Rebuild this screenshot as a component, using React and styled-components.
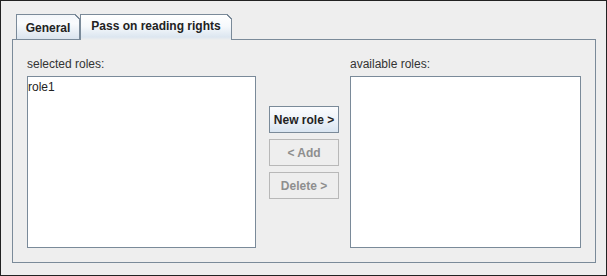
import React from 'react';
import styled, { createGlobalStyle } from 'styled-components';

const GlobalStyle = createGlobalStyle`
  body {
    margin: 0;
    background: #eeeeee;
  }
  * {
    box-sizing: border-box;
  }
`;

const Window = styled.div`
  width: 607px;
  height: 276px;
  border: 1px solid #222222;
  background: #eeeeee;
  padding: 13px 10px 12px 11px;
  display: flex;
  flex-direction: column;
  font-family: 'Liberation Sans', Arial, sans-serif;
  font-size: 12px;
  color: #333333;
`;

const TabRow = styled.div`
  display: flex;
  padding-left: 4px;
  height: 25px;
`;

const Tab = styled.div`
  position: relative;
  width: ${(p) => p.width}px;
  height: ${(p) => (p.selected ? 26 : 25)}px;
  margin-bottom: ${(p) => (p.selected ? -1 : 0)}px;
  z-index: ${(p) => (p.selected ? 2 : 1)};
  border: 1px solid #7a8a99;
  border-bottom: none;
  background: ${(p) =>
    p.selected
      ? 'linear-gradient(#ffffff 0%, #f6f9fc 45%, #dce6f0 88%, #eeeeee 100%)'
      : 'linear-gradient(#f4f7fa 0%, #f9fbfd 35%, #dae4ee 100%)'};
  padding-top: ${(p) => (p.selected ? 0 : 2)}px;
  line-height: 22px;
  text-align: center;
  font-weight: bold;
  color: #222222;
  white-space: nowrap;

  &::after {
    content: '';
    position: absolute;
    top: -1px;
    right: -1px;
    width: 5px;
    height: 5px;
    background: linear-gradient(
      to bottom left,
      #eeeeee 0 42%,
      #7a8a99 42% 62%,
      transparent 62%
    );
  }
`;

const Panel = styled.div`
  flex: 1;
  border: 1px solid #7a8a99;
  display: flex;
  padding: 17px 14px 14px 14px;
`;

const Column = styled.div`
  display: flex;
  flex-direction: column;
  width: ${(p) => p.width}px;
`;

const Label = styled.div`
  line-height: 15px;
  margin-bottom: 4px;
  color: #333333;
`;

const List = styled.div`
  flex: 1;
  background: #ffffff;
  border: 1px solid #7a8a99;
  padding: 2px 0;
`;

const ListItem = styled.div`
  line-height: 16px;
  color: #222222;
`;

const ButtonColumn = styled.div`
  align-self: center;
  display: flex;
  flex-direction: column;
  gap: 6px;
  width: 70px;
  margin: 0 11px 0 13px;
`;

const Button = styled.div`
  height: 27px;
  border: 1px solid ${(p) => (p.disabled ? '#b8b8b8' : '#7a8a99')};
  background: ${(p) =>
    p.disabled ? '#eeeeee' : 'linear-gradient(#fbfcfe 0%, #eef3f9 50%, #d9e5f1 100%)'};
  color: ${(p) => (p.disabled ? '#8e8e8e' : '#222222')};
  font-weight: bold;
  display: flex;
  align-items: center;
  justify-content: center;
  white-space: nowrap;
`;

export default function App() {
  return (
    <>
      <GlobalStyle />
      <Window>
        <TabRow>
          <Tab width={64}>General</Tab>
          <Tab width={152} selected>
            Pass on reading rights
          </Tab>
        </TabRow>
        <Panel>
          <Column width={229}>
            <Label>selected roles:</Label>
            <List>
              <ListItem>role1</ListItem>
            </List>
          </Column>
          <ButtonColumn>
            <Button>New role &gt;</Button>
            <Button disabled>&lt; Add</Button>
            <Button disabled>Delete &gt;</Button>
          </ButtonColumn>
          <Column width={231}>
            <Label>available roles:</Label>
            <List />
          </Column>
        </Panel>
      </Window>
    </>
  );
}
